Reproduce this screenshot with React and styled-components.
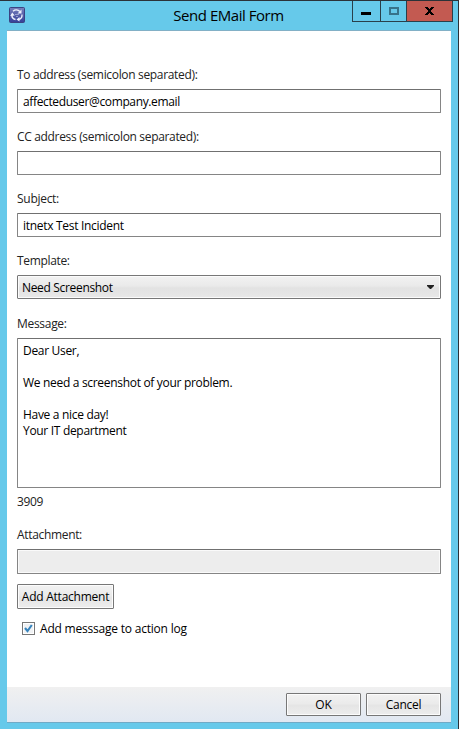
import React from 'react';
import styled, { createGlobalStyle } from 'styled-components';

const GlobalStyle = createGlobalStyle`
  * { box-sizing: border-box; }
  body { margin: 0; overflow: hidden; }
`;

const Window = styled.div`
  display: flex;
  flex-direction: column;
  width: 459px;
  height: 729px;
  padding: 0 7px 7px;
  background: #66c9ea;
  border-top: 1px solid #2b3238;
  border-right: 1px solid #2b3238;
  font: 12px/16px "Open Sans", "Noto Sans", sans-serif;
  letter-spacing: -0.33px;
  color: #000;
`;

const TitleBar = styled.header`
  display: grid;
  grid-template-columns: 101px 1fr 101px;
  height: 30px;
  flex: none;
  border-bottom: 1px solid #82b0c6;
`;

const AppIcon = styled.svg`
  display: block;
  margin: 6px 0 0 2px;
`;

const Title = styled.h1`
  margin: 4px 1px 0 0;
  font-size: 15px;
  line-height: 21px;
  font-weight: 400;
  letter-spacing: -0.47px;
  text-align: center;
  white-space: nowrap;
`;

const Controls = styled.div`
  display: flex;
  height: 21px;
  width: 101px;
  margin-left: 2px;
  border: 1px solid #29404b;
  border-top: 0;
`;

const Control = styled.button`
  width: ${(p) => p.$width}px;
  height: 20px;
  padding: 0;
  border: 0;
  border-left: ${(p) => (p.$first ? '0' : '1px solid #29404b')};
  background: ${(p) => (p.$close ? '#c35a51' : 'transparent')};
  svg { display: block; }
`;

const Content = styled.main`
  display: flex;
  flex-direction: column;
  align-items: flex-start;
  flex: 1;
  padding: 36px 10px 0;
  background: #fff;
`;

const Label = styled.label`
  height: 16px;
  margin-bottom: 6px;
  color: #222;
  letter-spacing: ${(p) => p.$spacing ?? -0.33}px;
  white-space: nowrap;
`;

const Input = styled.input`
  width: 424px;
  height: ${(p) => (p.readOnly ? 25 : 24)}px;
  margin: 0 0 ${(p) => p.$gap ?? 16}px;
  padding: 1px 5px 0;
  border: 1px solid #858585;
  border-top-color: #707070;
  border-radius: 1px;
  outline: 0;
  font: inherit;
  color: #000;
  letter-spacing: ${(p) => p.$spacing || 0}px;
  background: ${(p) => (p.readOnly ? '#ededed' : '#fff')};
  box-shadow: ${(p) => (p.readOnly ? 'inset 0 0 0 1px #fafafa' : 'none')};
`;

const Select = styled.button`
  display: flex;
  align-items: center;
  justify-content: space-between;
  width: 424px;
  height: 24px;
  margin-bottom: 17px;
  padding: 2px 6px 0 4px;
  border: 1px solid #777;
  border-radius: 1px;
  box-shadow: inset 0 0 0 1px #fbfbfb;
  background: linear-gradient(#f2f2f2 0%, #eaeaea 45%, #e2e2e2 55%, #e8e8e8 100%);
  font: inherit;
  letter-spacing: inherit;
  color: #000;
  svg { margin-top: -2px; }
`;

const Message = styled.textarea`
  width: 424px;
  height: 150px;
  padding: 4px 5px;
  border: 1px solid #858585;
  border-top-color: #707070;
  border-radius: 1px;
  outline: 0;
  resize: none;
  overflow: hidden;
  font: inherit;
  color: #000;
  letter-spacing: -0.31px;
`;

const Counter = styled.div`
  height: 16px;
  margin: 6px 0 17px;
  color: #222;
`;

const Button = styled.button`
  width: ${(p) => p.$width}px;
  height: ${(p) => p.$height}px;
  padding: 1px 0 0;
  border: 1px solid #777;
  border-radius: 1px;
  box-shadow: inset 0 0 0 1px #fcfcfc;
  background: linear-gradient(#f2f2f2 0%, #ebebeb 45%, #e5e5e5 55%, #ededed 100%);
  font: inherit;
  color: #000;
  letter-spacing: ${(p) => p.$spacing ?? -0.3}px;
  white-space: nowrap;
`;

const CheckRow = styled.label`
  display: flex;
  align-items: center;
  gap: 5px;
  height: 16px;
  margin: 12px 0 0 5px;
  letter-spacing: -0.21px;
  white-space: nowrap;
  svg { display: block; margin-top: -2px; }
`;

const Footer = styled.footer`
  display: flex;
  justify-content: flex-end;
  gap: 5px;
  flex: none;
  height: 35px;
  padding: 6px 10px 0;
  background: linear-gradient(#f0f0f0, #e1e8f2);
  box-shadow: 0 1px 0 #70aac6;
`;

const body = `Dear User,

We need a screenshot of your problem.

Have a nice day!
Your IT department`;

export default function App() {
  return (
    <Window>
      <GlobalStyle />
      <TitleBar>
        <AppIcon width="16" height="16" viewBox="0 0 16 16">
          <defs>
            <linearGradient id="iconFill" x1="0" y1="0" x2="0" y2="1">
              <stop offset="0" stopColor="#7880bb" />
              <stop offset="1" stopColor="#343f98" />
            </linearGradient>
          </defs>
          <rect x=".5" y=".5" width="15" height="15" rx="1" fill="url(#iconFill)" stroke="#3a4382" />
          <g fill="none" stroke="#eef1fc" strokeWidth="1.3">
            <path d="M4 4.300C6 2.500 9 2.500 11 4.500M13 7.500C13.200 10 12 12 9.500 12.600M6.500 12.500C4 11.800 2.700 9.500 3 7.500" />
          </g>
          <g fill="#eef1fc">
            <path d="M12.500 2.500V6.500H8.500zM10.500 10V14.500L7.500 12.400zM1.200 9L3.200 5.500L5.800 8.500z" />
            <path d="M6 7h4v1H6zM7 9h2v1H7z" opacity=".45" />
          </g>
        </AppIcon>
        <Title>Send EMail Form</Title>
        <Controls>
          <Control $first $width={27} aria-label="Minimize">
            <svg width="27" height="20"><path d="M8 11h10v3H8z" /></svg>
          </Control>
          <Control $width={26} aria-label="Maximize">
            <svg width="25" height="20"><path d="M9 7h8v6H9z" fill="none" stroke="#37738a" strokeWidth="2" /></svg>
          </Control>
          <Control $close $width={46} aria-label="Close">
            <svg width="45" height="20">
              <path d="M18 6h3v1h1v1h1V7h1V6h3v1h-1v1h-1v1h-1v2h1v1h1v1h1v1h-3v-1h-1v-1h-1v1h-1v1h-3v-1h1v-1h1v-1h1V9h-1V8h-1V7h-1z" />
            </svg>
          </Control>
        </Controls>
      </TitleBar>
      <Content>
        <Label>To address (semicolon separated):</Label>
        <Input defaultValue="affecteduser@company.email" $spacing={-0.36} />
        <Label>CC address (semicolon separated):</Label>
        <Input />
        <Label $spacing={-0.28}>Subject:</Label>
        <Input defaultValue="itnetx Test Incident" $spacing={-0.3} />
        <Label>Template:</Label>
        <Select>
          Need Screenshot
          <svg width="7" height="4"><path d="M0 0h7v1L4 4H3L0 1z" fill="#222" /></svg>
        </Select>
        <Label $spacing={-0.3}>Message:</Label>
        <Message defaultValue={body} spellCheck={false} />
        <Counter>3909</Counter>
        <Label>Attachment:</Label>
        <Input readOnly $gap={10} />
        <Button $width={97} $height={25} $spacing={-0.24}>Add Attachment</Button>
        <CheckRow>
          <svg width="13" height="13">
            <rect x=".5" y=".5" width="12" height="12" fill="#fff" stroke="#777" />
            <rect x="2" y="2" width="9" height="9" fill="#f0f2f4" />
            <path d="M3 6L5.500 9L9.800 3" fill="none" stroke="#3784bd" strokeWidth="2.100" />
          </svg>
          Add messsage to action log
        </CheckRow>
      </Content>
      <Footer>
        <Button $width={75} $height={23} $spacing={0}>OK</Button>
        <Button $width={75} $height={23}>Cancel</Button>
      </Footer>
    </Window>
  );
}
